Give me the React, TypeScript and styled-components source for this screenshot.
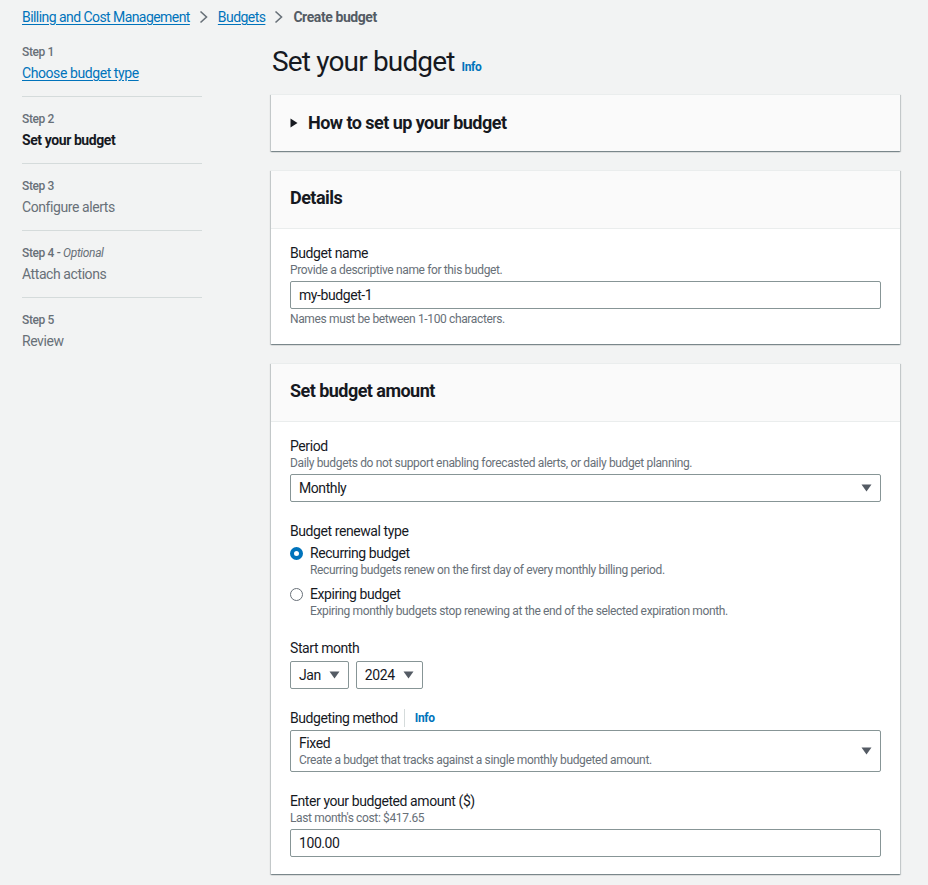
import React from "react";
import styled, { createGlobalStyle } from "styled-components";

const GlobalStyle = createGlobalStyle`
  body {
    margin: 0;
    background: #f2f3f3;
    font-family: Roboto, "Liberation Sans", sans-serif;
    color: #16191f;
    -webkit-font-smoothing: antialiased;
  }
  * {
    letter-spacing: -0.03em;
  }
`;

const Page = styled.div`
  padding: 7px 28px 0 22px;
  min-height: 885px;
  box-sizing: border-box;
`;

const Crumbs = styled.nav`
  display: flex;
  align-items: center;
  height: 20px;
  font-size: 14px;
  line-height: 20px;
`;

const CrumbLink = styled.a`
  color: #0073bb;
  text-decoration: underline;
  text-underline-offset: 2px;
  letter-spacing: -0.04em;
`;

const CrumbCurrent = styled.span`
  color: #545b64;
  font-weight: 700;
`;

const Sep = styled.span`
  display: inline-flex;
  margin: 0 10px 0 9px;
`;

const Layout = styled.div`
  display: grid;
  grid-template-columns: 180px 1fr;
  column-gap: 69px;
  margin-top: 13px;
`;

const Steps = styled.ol`
  list-style: none;
  margin: 0;
  padding: 3px 0 0;
`;

const Step = styled.li`
  padding: 0 0 13px;
  & + & {
    border-top: 1px solid #d5dbdb;
    padding-top: 13px;
  }
`;

const StepNum = styled.div`
  font-size: 12px;
  line-height: 18px;
  color: #687078;
  font-weight: 500;
  em {
    font-weight: 400;
  }
`;

const StepTitle = styled.div<{ $state: "link" | "current" | "todo" }>`
  margin-top: 2px;
  font-size: 14px;
  line-height: 20px;
  color: ${(p) =>
    p.$state === "link" ? "#0073bb" : p.$state === "current" ? "#16191f" : "#687078"};
  font-weight: ${(p) => (p.$state === "current" ? 700 : 400)};
  text-decoration: ${(p) => (p.$state === "link" ? "underline" : "none")};
  text-underline-offset: 2px;
`;

const Main = styled.main`
  display: flex;
  flex-direction: column;
  gap: 19px;
`;

const TitleRow = styled.div`
  display: flex;
  align-items: baseline;
  gap: 7px;
  margin-top: 4px;
  margin-bottom: -5px;
  padding-left: 1px;
`;

const H1 = styled.h1`
  margin: 0;
  font-size: 28px;
  line-height: 36px;
  font-weight: 400;
  color: #16191f;
`;

const Info = styled.a`
  color: #0073bb;
  font-size: 12px;
  font-weight: 700;
`;

const Card = styled.section`
  background: #fff;
  border-top: 1px solid #eaeded;
  box-shadow: 0 1px 1px 0 rgba(0, 28, 36, 0.3), 1px 1px 1px 0 rgba(0, 28, 36, 0.15),
    -1px 1px 1px 0 rgba(0, 28, 36, 0.15);
`;

const CardHeader = styled.div<{ $alone?: boolean }>`
  display: flex;
  align-items: center;
  gap: 10px;
  background: #fafafa;
  padding: ${(p) => (p.$alone ? "17px 19px 17px" : "16px 19px 19px")};
  border-bottom: ${(p) => (p.$alone ? "none" : "1px solid #eaeded")};
  font-size: 18px;
  line-height: 22px;
  font-weight: 700;
  color: #16191f;
`;

const CardBody = styled.div`
  display: flex;
  flex-direction: column;
  gap: 20px;
  padding: 15px 19px 17px;
`;

const Field = styled.div`
  display: flex;
  flex-direction: column;
`;

const Label = styled.div`
  display: flex;
  align-items: center;
  font-size: 14px;
  line-height: 18px;
  color: #16191f;
`;

const LabelInfo = styled.span`
  margin-left: 6px;
  padding-left: 10px;
  border-left: 1px solid #d5dbdb;
  color: #0073bb;
  font-size: 12px;
  font-weight: 700;
  line-height: 18px;
`;

const Desc = styled.div`
  font-size: 12px;
  line-height: 16px;
  color: #687078;
`;

const Control = styled.div`
  margin-top: 3px;
`;

const Constraint = styled.div`
  margin-top: 2px;
  font-size: 12px;
  line-height: 16px;
  color: #687078;
`;

const Input = styled.input`
  box-sizing: border-box;
  width: 100%;
  height: 28px;
  padding: 0 8px;
  border: 1px solid #879596;
  border-radius: 2px;
  font: inherit;
  font-size: 14px;
  letter-spacing: -0.03em;
  color: #16191f;
  background: #fff;
  outline: none;
`;

const Select = styled.div<{ $tall?: boolean; $inline?: boolean }>`
  box-sizing: border-box;
  display: ${(p) => (p.$inline ? "inline-flex" : "flex")};
  align-items: center;
  justify-content: space-between;
  gap: 8px;
  width: ${(p) => (p.$inline ? "auto" : "100%")};
  height: ${(p) => (p.$tall ? "42px" : "28px")};
  padding: 0 8px;
  border: 1px solid #879596;
  border-radius: 2px;
  background: #fff;
  font-size: 14px;
  line-height: 18px;
`;

const OptionText = styled.div`
  display: flex;
  flex-direction: column;
`;

const InlineRow = styled.div`
  display: flex;
  gap: 7px;
  margin-top: 4px;
`;

const RadioGroup = styled.div`
  display: flex;
  flex-direction: column;
  gap: 7px;
  margin-top: 4px;
`;

const RadioRow = styled.div`
  display: grid;
  grid-template-columns: 13px 1fr;
  column-gap: 7px;
  align-items: start;
`;

const RadioDot = styled.span<{ $on?: boolean }>`
  box-sizing: border-box;
  width: 13px;
  height: 13px;
  margin-top: 3px;
  border-radius: 50%;
  background: #fff;
  border: ${(p) => (p.$on ? "4px solid #0073bb" : "1px solid #687078")};
`;

const Caret = () => (
  <svg width="11" height="8" viewBox="0 0 11 8">
    <path d="M0.5 0.5h10L5.5 7.5z" fill="#545b64" />
  </svg>
);

const Chevron = () => (
  <svg width="9" height="14" viewBox="0 0 9 14">
    <path d="M1.5 1.5l6 5.5-6 5.5" fill="none" stroke="#687078" strokeWidth="1.6" />
  </svg>
);

const RightTriangle = () => (
  <svg width="8" height="10" viewBox="0 0 8 10">
    <path d="M0.5 0.5v9L7.5 5z" fill="#16191f" />
  </svg>
);

const steps: { num: React.ReactNode; title: string; state: "link" | "current" | "todo" }[] = [
  { num: "Step 1", title: "Choose budget type", state: "link" },
  { num: "Step 2", title: "Set your budget", state: "current" },
  { num: "Step 3", title: "Configure alerts", state: "todo" },
  {
    num: (
      <>
        Step 4 - <em>Optional</em>
      </>
    ),
    title: "Attach actions",
    state: "todo",
  },
  { num: "Step 5", title: "Review", state: "todo" },
];

export default function App() {
  return (
    <>
      <GlobalStyle />
      <Page>
        <Crumbs>
          <CrumbLink>Billing and Cost Management</CrumbLink>
          <Sep>
            <Chevron />
          </Sep>
          <CrumbLink>Budgets</CrumbLink>
          <Sep>
            <Chevron />
          </Sep>
          <CrumbCurrent>Create budget</CrumbCurrent>
        </Crumbs>

        <Layout>
          <Steps>
            {steps.map((s, i) => (
              <Step key={i}>
                <StepNum>{s.num}</StepNum>
                <StepTitle $state={s.state}>{s.title}</StepTitle>
              </Step>
            ))}
          </Steps>

          <Main>
            <TitleRow>
              <H1>Set your budget</H1>
              <Info>Info</Info>
            </TitleRow>

            <Card>
              <CardHeader $alone>
                <RightTriangle />
                How to set up your budget
              </CardHeader>
            </Card>

            <Card>
              <CardHeader>Details</CardHeader>
              <CardBody>
                <Field>
                  <Label>Budget name</Label>
                  <Desc>Provide a descriptive name for this budget.</Desc>
                  <Control>
                    <Input defaultValue="my-budget-1" />
                  </Control>
                  <Constraint>Names must be between 1-100 characters.</Constraint>
                </Field>
              </CardBody>
            </Card>

            <Card>
              <CardHeader>Set budget amount</CardHeader>
              <CardBody>
                <Field>
                  <Label>Period</Label>
                  <Desc>
                    Daily budgets do not support enabling forecasted alerts, or daily budget
                    planning.
                  </Desc>
                  <Control>
                    <Select>
                      Monthly
                      <Caret />
                    </Select>
                  </Control>
                </Field>

                <Field>
                  <Label>Budget renewal type</Label>
                  <RadioGroup>
                    <RadioRow>
                      <RadioDot $on />
                      <div>
                        <Label>Recurring budget</Label>
                        <Desc>
                          Recurring budgets renew on the first day of every monthly billing
                          period.
                        </Desc>
                      </div>
                    </RadioRow>
                    <RadioRow>
                      <RadioDot />
                      <div>
                        <Label>Expiring budget</Label>
                        <Desc>
                          Expiring monthly budgets stop renewing at the end of the selected
                          expiration month.
                        </Desc>
                      </div>
                    </RadioRow>
                  </RadioGroup>
                </Field>

                <Field>
                  <Label>Start month</Label>
                  <InlineRow>
                    <Select $inline>
                      Jan
                      <Caret />
                    </Select>
                    <Select $inline>
                      2024
                      <Caret />
                    </Select>
                  </InlineRow>
                </Field>

                <Field>
                  <Label>
                    Budgeting method
                    <LabelInfo>Info</LabelInfo>
                  </Label>
                  <Control>
                    <Select $tall>
                      <OptionText>
                        <span>Fixed</span>
                        <Desc>
                          Create a budget that tracks against a single monthly budgeted amount.
                        </Desc>
                      </OptionText>
                      <Caret />
                    </Select>
                  </Control>
                </Field>

                <Field>
                  <Label>Enter your budgeted amount ($)</Label>
                  <Desc>Last month's cost: $417.65</Desc>
                  <Control>
                    <Input defaultValue="100.00" />
                  </Control>
                </Field>
              </CardBody>
            </Card>
          </Main>
        </Layout>
      </Page>
    </>
  );
}
